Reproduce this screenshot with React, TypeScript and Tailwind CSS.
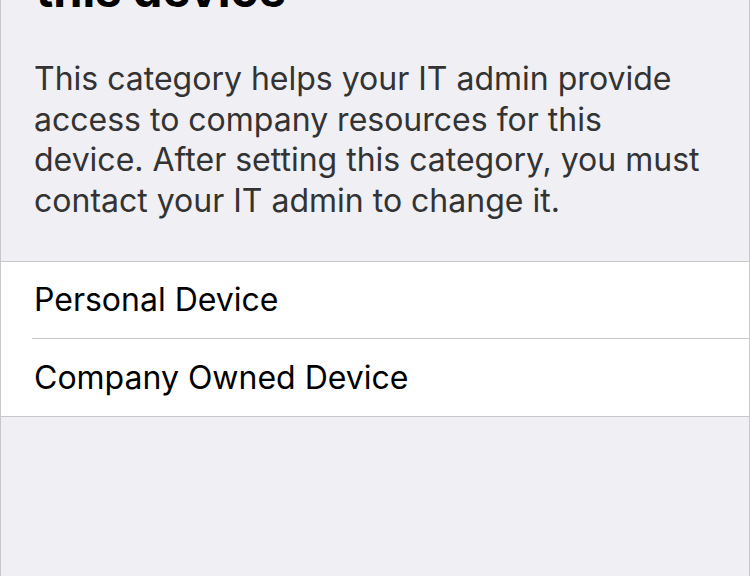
import React from "react";

const options = ["Personal Device", "Company Owned Device"];

export default function App() {
  return (
    <div
      className="min-h-[576px] overflow-hidden border-x border-[#c8c7cc] bg-[#efeff4]"
      style={{ fontFamily: "Inter, 'Noto Sans', sans-serif" }}
    >
      <h1 className="-mt-[36px] px-[35px] text-[47px] font-bold leading-[52px] text-black">
        this device
      </h1>

      <p className="mt-[43px] pl-[33px] pr-[36px] text-[32px] leading-[40.5px] text-[#333333]">
        This category helps your IT admin provide access to company resources for this
        device. After setting this category, you must contact your IT admin to change it.
      </p>

      <ul className="mt-[40px] border-y border-[#c8c7cc] bg-white">
        {options.map((label, i) => (
          <li key={label} className="pl-[31px]">
            <div
              className={
                i < options.length - 1
                  ? "flex h-[77px] items-center border-b border-[#c8c7cc] pl-[2px] text-[32px] text-black"
                  : "flex h-[77px] items-center pl-[2px] text-[32px] text-black"
              }
            >
              {label}
            </div>
          </li>
        ))}
      </ul>
    </div>
  );
}
